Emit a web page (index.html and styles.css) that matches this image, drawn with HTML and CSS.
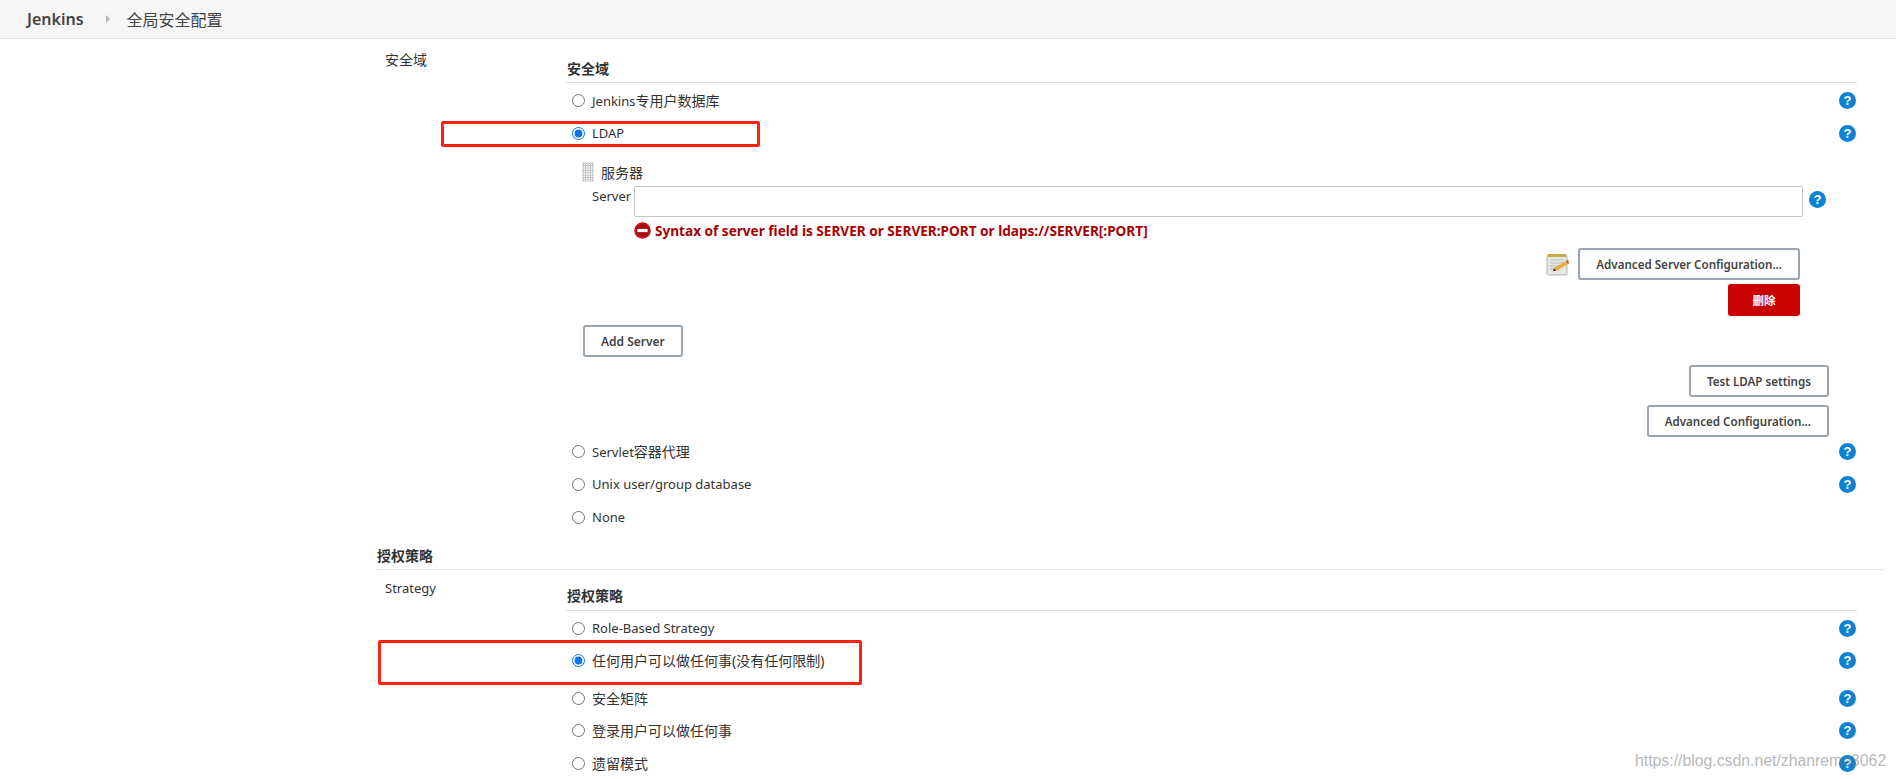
FILE: index.html
```html
<!doctype html>
<html lang="zh-CN">
	<head>
		<meta charset="utf-8" />
		<title>全局安全配置 - Jenkins</title>
		<link rel="stylesheet" href="styles.css">
	</head>

	<body>
		<!-- Breadcrumb bar -->
		<div class="breadcrumb">
			<span class="crumb-root">Jenkins</span>
			<span class="crumb-arrow"></span>
			<span class="crumb-page">全局安全配置</span>
		</div>

		<div class="main">
			<!-- Security realm -->
			<div class="section">
				<div class="field-label zh">安全域</div>
				<div class="form">
					<div class="group-title zh">安全域</div>

					<div class="option first">
						<label class="radio"><input type="radio" name="realm"> <span>Jenkins<span class="zh">专用户数据库</span></span></label>
						<span class="help">?</span>
					</div>
					<div class="option">
						<label class="radio"><input type="radio" name="realm" checked> LDAP</label>
						<span class="help">?</span>
					</div>

					<!-- LDAP server block -->
					<div class="server-block">
						<div class="server-title">
							<span class="grip"></span>
							<span class="zh">服务器</span>
						</div>
						<div class="server-row">
							<label class="server-label">Server</label>
							<input class="text-input" type="text">
							<span class="help">?</span>
						</div>
						<div class="error-row">
							<svg class="error-icon" viewBox="0 0 17 17">
								<circle cx="8.5" cy="8.5" r="8.3" fill="#c4161c"/>
								<circle cx="8.5" cy="8.5" r="6.6" fill="#a80f14"/>
								<rect x="3.4" y="6.9" width="10.2" height="3.2" fill="#fff"/>
							</svg>
							<span>Syntax of server field is SERVER or SERVER:PORT or ldaps://SERVER[:PORT]</span>
						</div>
						<div class="advanced-row">
							<svg class="notepad" viewBox="0 0 24 23">
								<rect x="1" y="2" width="20" height="20" rx="1" fill="#e6e6e2" stroke="#b5b5b0"/>
								<rect x="2" y="1" width="18" height="3" fill="#c9a94e"/>
								<path d="M4 7h14M4 10h14M4 13h9M4 16h6" stroke="#b9bcc0"/>
								<path d="M7 18l1-3 12-7 2 3-12 7z" fill="#e8a93a"/>
								<path d="M20 8l2-1 1 3-1 1z" fill="#d9442f"/>
								<path d="M7 18l1-3 2 3z" fill="#4a3a28"/>
							</svg>
							<button class="btn">Advanced Server Configuration...</button>
						</div>
						<div class="delete-row">
							<button class="btn btn-danger">删除</button>
						</div>
					</div>

					<div class="add-row">
						<button class="btn">Add Server</button>
					</div>
					<div class="action-row">
						<button class="btn">Test LDAP settings</button>
					</div>
					<div class="action-row">
						<button class="btn">Advanced Configuration...</button>
					</div>

					<div class="option after-actions">
						<label class="radio"><input type="radio" name="realm"> <span>Servlet<span class="zh">容器代理</span></span></label>
						<span class="help">?</span>
					</div>
					<div class="option">
						<label class="radio"><input type="radio" name="realm"> Unix user/group database</label>
						<span class="help">?</span>
					</div>
					<div class="option">
						<label class="radio"><input type="radio" name="realm"> None</label>
					</div>
				</div>
			</div>

			<!-- Authorization -->
			<div class="section-title zh">授权策略</div>
			<div class="section">
				<div class="field-label strategy">Strategy</div>
				<div class="form">
					<div class="group-title short zh">授权策略</div>

					<div class="option first">
						<label class="radio"><input type="radio" name="auth"> Role-Based Strategy</label>
						<span class="help">?</span>
					</div>
					<div class="option near">
						<label class="radio"><input type="radio" name="auth" checked> <span class="zh">任何用户可以做任何事(没有任何限制)</span></label>
						<span class="help">?</span>
					</div>
					<div class="option tall">
						<label class="radio"><input type="radio" name="auth"> <span class="zh">安全矩阵</span></label>
						<span class="help">?</span>
					</div>
					<div class="option near">
						<label class="radio"><input type="radio" name="auth"> <span class="zh">登录用户可以做任何事</span></label>
						<span class="help">?</span>
					</div>
					<div class="option">
						<label class="radio"><input type="radio" name="auth"> <span class="zh">遗留模式</span></label>
						<span class="help">?</span>
					</div>
				</div>
			</div>
		</div>

		<!-- Annotations drawn on top of the page -->
		<div class="mark mark-ldap"></div>
		<div class="mark mark-anyone"></div>
		<div class="watermark">https://blog.csdn.net/zhanremo3062</div>
	</body>
</html>
```
FILE: styles.css
```css
body {
	margin: 0;
	height: 779px;
	overflow: hidden;
	position: relative;
	background: #fff;
	color: #333;
	font-family: "Noto Sans", "Noto Sans CJK SC", sans-serif;
	font-size: 13px;
}

.zh {
	font-size: 14px;
}

.breadcrumb {
	display: flex;
	align-items: center;
	height: 38px;
	padding-left: 27px;
	background: #f6f6f6;
	border-bottom: 1px solid #e6e6e6;
	color: #444;
}

.crumb-root {
	font-size: 16px;
	font-weight: 600;
}

.crumb-arrow {
	margin: 0 17px 0 22px;
	border-left: 4px solid #b4b4b4;
	border-top: 4px solid transparent;
	border-bottom: 4px solid transparent;
}

.crumb-page {
	font-size: 16px;
}

.main {
	padding: 0 12px 0 377px;
}

.section {
	display: grid;
	grid-template-columns: 189px 1fr;
}

.field-label {
	padding: 12px 0 0 8px;
	line-height: 18px;
}

.field-label.strategy {
	padding-top: 9px;
}

.form {
	padding-right: 27px;
}

.group-title {
	height: 44px;
	box-sizing: border-box;
	display: flex;
	align-items: flex-end;
	padding: 0 0 3px 1px;
	line-height: 20px;
	font-weight: 700;
	border-bottom: 1px solid #e0e0e0;
}

.group-title.short {
	height: 41px;
	padding-bottom: 4px;
}

.section-title {
	height: 30px;
	box-sizing: border-box;
	margin-top: 10px;
	padding-bottom: 3px;
	display: flex;
	align-items: flex-end;
	line-height: 20px;
	font-weight: 700;
	border-bottom: 1px solid #e0e0e0;
}

.option {
	display: flex;
	justify-content: space-between;
	align-items: center;
	height: 26px;
	margin-top: 7px;
	padding: 0 1px 0 6px;
}

.option.first {
	margin-top: 4px;
}

.option.near {
	margin-top: 6px;
}

.option.tall {
	margin-top: 12px;
}

.option.after-actions {
	margin-top: 1px;
}

.radio {
	display: flex;
	align-items: center;
}

.radio input {
	margin: 0 7px 0 0;
	width: 13px;
	height: 13px;
	accent-color: #0a75e6;
}

.help {
	width: 17px;
	height: 17px;
	flex: none;
	border-radius: 50%;
	background: #0b82d4;
	color: #fff;
	font-family: "Liberation Sans", sans-serif;
	font-size: 13px;
	font-weight: 700;
	line-height: 17px;
	text-align: center;
}

.server-block {
	padding: 16px 0 0 16px;
}

.server-title {
	display: flex;
	align-items: center;
	gap: 7px;
	height: 20px;
}

.grip {
	width: 12px;
	height: 20px;
	background: radial-gradient(circle, #bbb 1px, transparent 1px) 0 0 / 2.4px 2.4px;
}

.server-row {
	display: flex;
	align-items: flex-start;
	margin: 4px 0 0 10px;
}

.server-label {
	width: 42px;
	line-height: 20px;
}

.text-input {
	width: 1169px;
	height: 31px;
	box-sizing: border-box;
	border: 1px solid #c4c4c4;
	border-radius: 2px;
	background: #fff;
}

.server-row .help {
	margin: 5px 0 0 6px;
}

.error-row {
	display: flex;
	align-items: center;
	gap: 4px;
	height: 18px;
	margin: 4px 0 0 52px;
	color: #a80000;
	font-weight: 700;
	font-size: 13.6px;
}

.error-icon {
	width: 17px;
	height: 17px;
}

.advanced-row {
	display: flex;
	justify-content: flex-end;
	align-items: center;
	gap: 8px;
	margin: 9px 57px 0 0;
}

.notepad {
	width: 24px;
	height: 23px;
}

.delete-row {
	display: flex;
	justify-content: flex-end;
	margin: 4px 57px 0 0;
}

.btn {
	height: 32px;
	padding: 0 16px;
	background: #fff;
	border: 2px solid #9aa5af;
	border-radius: 3px;
	color: #444;
	font-family: "Noto Sans", "Noto Sans CJK SC", sans-serif;
	font-size: 11.6px;
	font-weight: 600;
}

.btn-danger {
	width: 72px;
	background: #c80000;
	border-color: #c80000;
	color: #fff;
	padding: 0;
}

.add-row {
	margin: 9px 0 0 17px;
}

.add-row .btn {
	font-size: 12px;
}

.action-row {
	display: flex;
	justify-content: flex-end;
	margin: 8px 28px 0 0;
}

.mark {
	position: absolute;
	box-sizing: border-box;
	border: 3px solid #ff2010;
	border-radius: 2px;
}

.mark-ldap {
	left: 441px;
	top: 121px;
	width: 319px;
	height: 26px;
}

.mark-anyone {
	left: 378px;
	top: 640px;
	width: 484px;
	height: 45px;
}

.watermark {
	position: absolute;
	left: 1635px;
	top: 750px;
	color: rgba(120, 120, 120, 0.55);
	font-family: "Liberation Sans", sans-serif;
	font-size: 15.8px;
	line-height: 22px;
}
```
